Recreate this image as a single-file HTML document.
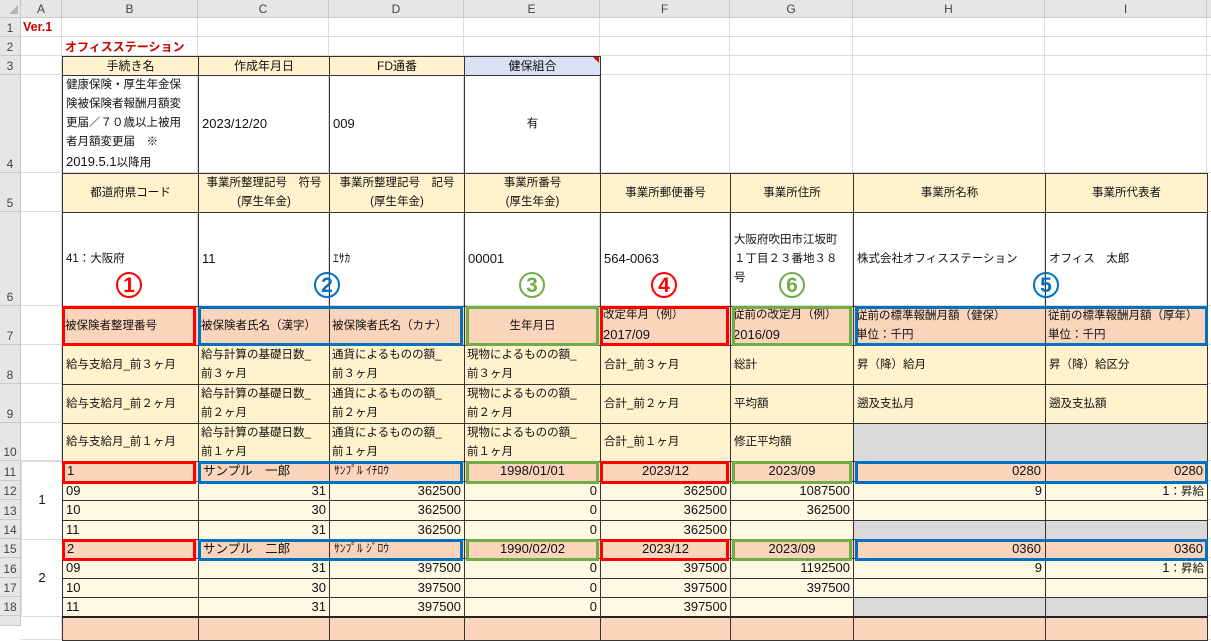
<!DOCTYPE html>
<html><head><meta charset="utf-8">
<style>
body{margin:0;width:1211px;height:621px;overflow:hidden;background:#fff;position:relative;font-family:"Liberation Sans","Noto Sans CJK JP",sans-serif;font-size:11.5px;color:#111}
.c{position:absolute;box-sizing:border-box;overflow:visible;white-space:nowrap;line-height:19px;padding:0 3px}
.hd{position:absolute;box-sizing:border-box;background:#e6e6e6;color:#444;font-size:12px;text-align:center;border-right:1px solid #c8c8c8;border-bottom:1px solid #c8c8c8}
.bx{position:absolute;box-sizing:border-box;border:3px solid}
.cn{position:absolute;width:26px;height:26px;border:2px solid;border-radius:50%;box-sizing:border-box;font:bold 21px/23px "Liberation Sans",sans-serif;text-align:center}
.n{font-size:13px}
</style></head><body>
<div id="g"></div>
<script>
var X=[21,62,198,329,464,600,730,853,1045,1207,1240];
var Y=[18,37,56,75,173,212,306,345,384,423,461,481,500,520,539,558,578,597,616,640];
var h='';
function cell(ci,ri,t,o){o=o||{};var ce=o.ce||ci,re=o.re||ri;
var l=X[ci],tp=Y[ri],w=X[ce+1]-l,ht=Y[re+1]-tp;
var st='left:'+l+'px;top:'+tp+'px;width:'+(w+1)+'px;height:'+(ht+1)+'px;';
st+='background:'+(o.bg||'transparent')+';';
st+='border:1px solid '+(o.bd||'#d4d4d4')+';';
st+='text-align:'+(o.al||'left')+';';
st+='display:flex;flex-direction:column;justify-content:'+(o.va||'center')+';';
if(o.st)st+=o.st;
h+='<div class="c" style="'+st+'"><div>'+t+'</div></div>';}
function N(s){return '<span class="n">'+s+'</span>';}
for(var r=0;r<Y.length-1;r++)for(var c=0;c<X.length-1;c++){
h+='<div style="position:absolute;left:'+X[c]+'px;top:'+Y[r]+'px;width:'+(X[c+1]-X[c])+'px;height:'+(Y[r+1]-Y[r])+'px;border-right:1px solid #dcdcdc;border-bottom:1px solid #dcdcdc;box-sizing:border-box"></div>';}
var YL='#fff2cc',PE='#fbd5bb',LT='#fff8e3',GR='#d9d9d9',B='#333';
cell(0,0,'Ver.1',{st:'color:#c00;font-weight:bold;font-size:12.5px;border:none;padding:0 2px;',va:'flex-start'});
cell(1,1,'オフィスステーション',{st:'color:#c00;font-weight:bold;font-size:12px;border:none;',va:'flex-end'});
var r3=['手続き名','作成年月日','FD通番','健保組合'];
for(var i=0;i<4;i++)cell(1+i,2,r3[i],{bg:i==3?'#dae3f3':YL,bd:B,al:'center',st:'font-size:12px;'});
cell(1,3,'健康保険・厚生年金保<br>険被保険者報酬月額変<br>更届／７０歳以上被用<br>者月額変更届　※<br>'+N('2019.5.1')+'以降用',{bd:B,va:'flex-end'});
cell(2,3,N('2023/12/20'),{bd:B});cell(3,3,N('009'),{bd:B});cell(4,3,'有',{bd:B,al:'center'});
var r5=['都道府県コード','事業所整理記号　符号<br>(厚生年金)','事業所整理記号　記号<br>(厚生年金)','事業所番号<br>(厚生年金)','事業所郵便番号','事業所住所','事業所名称','事業所代表者'];
for(i=0;i<8;i++)cell(1+i,4,r5[i],{bg:YL,bd:B,al:'center',st:i>=1&&i<=3?'padding:0;':''});
var r6=['41：大阪府','11','ｴｻｶ','00001','564-0063','大阪府吹田市江坂町<br>１丁目２３番地３８<br>号','株式会社オフィスステーション','オフィス　太郎'];
for(i=0;i<8;i++)cell(1+i,5,(i==1||i==3||i==4)?N(r6[i]):r6[i],{bd:B});
var r7=['被保険者整理番号','被保険者氏名（漢字）','被保険者氏名（カナ）','生年月日','改定年月（例）<br>'+N('2017/09'),'従前の改定月（例）<br>'+N('2016/09'),'従前の標準報酬月額（健保）<br>単位：千円','従前の標準報酬月額（厚年）<br>単位：千円'];
for(i=0;i<8;i++)cell(1+i,6,r7[i],{bg:PE,bd:B,al:i==3?'center':'left',st:'padding:0 2px;'});
var nm=['３','２','１'];
var gcol=['総計','平均額','修正平均額'],hcol=['昇（降）給月','遡及支払月',''],icol=['昇（降）給区分','遡及支払額',''];
for(var k=0;k<3;k++){var rr=7+k;
cell(1,rr,'給与支給月_前'+nm[k]+'ヶ月',{bg:YL,bd:B});
cell(2,rr,'給与計算の基礎日数_<br>前'+nm[k]+'ヶ月',{bg:YL,bd:B,va:'flex-start',st:'padding:0 2px;'});
cell(3,rr,'通貨によるものの額_<br>前'+nm[k]+'ヶ月',{bg:YL,bd:B,va:'flex-start',st:'padding:0 2px;'});
cell(4,rr,'現物によるものの額_<br>前'+nm[k]+'ヶ月',{bg:YL,bd:B,va:'flex-start',st:'padding:0 2px;'});
cell(5,rr,'合計_前'+nm[k]+'ヶ月',{bg:YL,bd:B});
cell(6,rr,gcol[k],{bg:YL,bd:B});
cell(7,rr,hcol[k],{bg:k==2?GR:YL,bd:B});
cell(8,rr,icol[k],{bg:k==2?GR:YL,bd:B});}
function person(r0,n,kj,kn,bd,ga,vals,g1,g2){
cell(0,r0,N(n),{re:r0+3,al:'center',bd:'#dcdcdc',bg:'#fff'});
var p=[N(n),kj,kn,N(bd),N('2023/12'),N('2023/09'),N(ga),N(ga)],al=['left','left','left','center','center','center','right','right'];
for(var i=0;i<8;i++)cell(1+i,r0,p[i],{bg:PE,bd:B,al:al[i],st:'padding:0 4px;'+(i==1?'font-size:12.5px;':'')});
var mo=['09','10','11'],dy=['31','30','31'],gg=[g1,g2,''];
for(var j=0;j<3;j++){var rr=r0+1+j,o={bg:LT,bd:B,al:'right',st:'padding:0 3px;line-height:17px;'};
cell(1,rr,N(mo[j]),{bg:LT,bd:B,st:'line-height:17px;'});cell(2,rr,N(dy[j]),o);cell(3,rr,N(vals),o);cell(4,rr,N('0'),o);cell(5,rr,N(vals),o);cell(6,rr,N(gg[j]),o);
cell(7,rr,j==0?N('9'):'',{bg:j==2?GR:LT,bd:B,al:'right',st:'line-height:17px;'});
cell(8,rr,j==0?N('1')+'：昇給':'',{bg:j==2?GR:LT,bd:B,al:'right',st:'line-height:17px;'});}}
person(10,'1','サンプル　一郎','ｻﾝﾌﾟﾙ ｲﾁﾛｳ','1998/01/01','0280','362500','1087500','362500');
person(14,'2','サンプル　二郎','ｻﾝﾌﾟﾙ ｼﾞﾛｳ','1990/02/02','0360','397500','1192500','397500');
for(i=1;i<9;i++)cell(i,18,'',{bg:PE,bd:B,st:'border-top:2px solid #222;'});
h+='<div class="hd" style="left:0;top:0;width:21px;height:18px"></div>';
h+='<div style="position:absolute;left:9px;top:5px;width:0;height:0;border-left:9px solid transparent;border-bottom:9px solid #b5b5b5"></div>';
var L=['A','B','C','D','E','F','G','H','I',''];
for(i=0;i<10;i++)h+='<div class="hd" style="left:'+X[i]+'px;top:0;width:'+(X[i+1]-X[i])+'px;height:18px;line-height:18px">'+L[i]+'</div>';
for(r=0;r<18;r++)h+='<div class="hd" style="left:0;top:'+Y[r]+'px;width:21px;height:'+(Y[r+1]-Y[r])+'px;display:flex;align-items:flex-end;justify-content:center;line-height:15px">'+(r+1)+'</div>';
h+='<div class="hd" style="left:0;top:616px;width:21px;height:10px"></div>';
h+='<div style="position:absolute;left:593px;top:57px;width:0;height:0;border-left:6px solid transparent;border-top:6px solid #e00"></div>';
var RD='#ff0000',BL='#0070c0',GN='#70ad47';
function bx(l,t,w,ht,c){h+='<div class="bx" style="left:'+l+'px;top:'+t+'px;width:'+w+'px;height:'+ht+'px;border-color:'+c+'"></div>';}
[[306,40],[461,23],[539,22]].forEach(function(a){var t=a[0],ht=a[1];
bx(62,t,134,ht,RD);bx(198,t,265,ht,BL);bx(466,t,133,ht,GN);bx(600,t,129,ht,RD);bx(732,t,120,ht,GN);bx(855,t,353,ht,BL);});
function cn(x,n,c){h+='<div class="cn" style="left:'+(x-13)+'px;top:272px;border-color:'+c+';color:'+c+'">'+n+'</div>';}
cn(129,'1',RD);cn(327,'2',BL);cn(532,'3',GN);cn(664,'4',RD);cn(792,'6',GN);cn(1046,'5',BL);
document.getElementById('g').innerHTML=h;
</script>
</body></html>
